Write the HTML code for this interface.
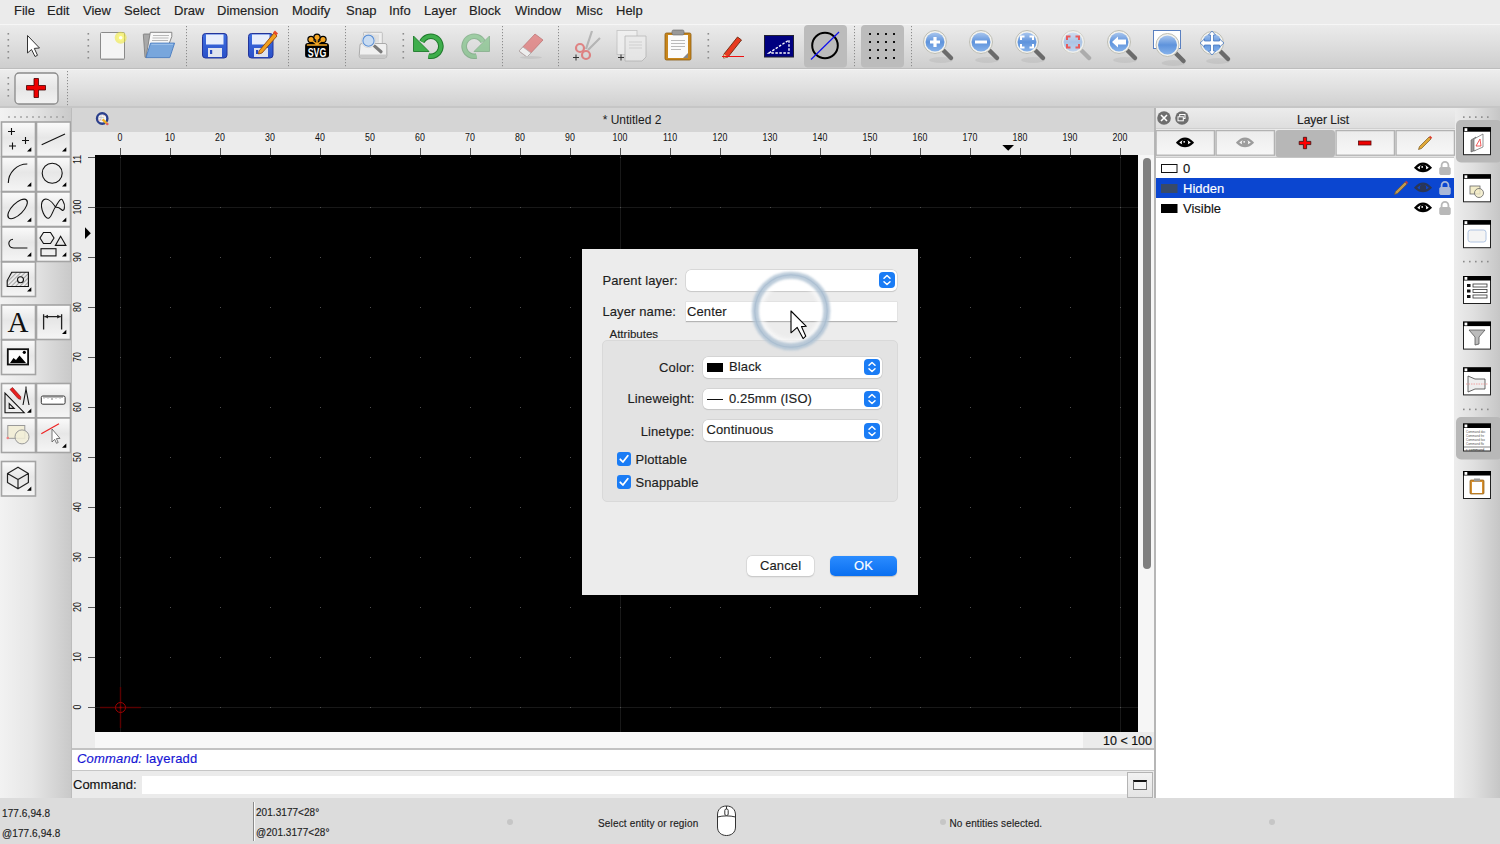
<!DOCTYPE html>
<html><head><meta charset="utf-8">
<style>
*{margin:0;padding:0;box-sizing:border-box}
html,body{-webkit-font-smoothing:antialiased;width:1500px;height:844px;overflow:hidden;background:#ececec;font-family:"Liberation Sans",sans-serif;color:#1a1a1a}
.a{position:absolute}
.t{position:absolute;white-space:nowrap;line-height:1;-webkit-text-stroke:0.15px currentColor}
#menubar{left:0;top:0;width:1500px;height:24px;background:#ebebeb}
#menubar .t{top:4px;font-size:13px;color:#222}
#tb1{left:0;top:24px;width:1500px;height:45px;background:linear-gradient(#ebebeb,#e0e0e0 40%,#cecece);border-top:1px solid #f6f6f6;border-bottom:1px solid #bdbdbd}
#tb2{left:0;top:69px;width:1500px;height:39px;background:linear-gradient(#ededed,#dfdfdf 50%,#d0d0d0);border-top:1px solid #f4f4f4;border-bottom:1px solid #c4c4c4}
.sep{position:absolute;width:2px;background:repeating-linear-gradient(#9a9a9a 0 2px,transparent 2px 6px)}
#pal{left:0;top:108px;width:71px;height:691px;background:linear-gradient(90deg,#f2f2f2,#e6e6e6 45%,#c9c9c9)}
.pb{position:absolute;width:35px;height:35px;border:2px solid #a9a9a9;background:linear-gradient(#f9f9f9,#e9e9e9 45%,#f4f4f4)}
#mdi{left:71px;top:107px;width:1084px;height:692px;background:#ececec;border-left:1px solid #bcbcbc}
#mtitle{left:72px;top:108px;width:1082px;height:24px;background:#d5d5d5}
#hruler{left:72px;top:132px;width:1082px;height:23px;background:#ececec}
#vruler{left:72px;top:155px;width:23px;height:577px;background:#ececec}
#canvas{left:95px;top:155px;width:1043px;height:577px;background:#000}
#vscroll{left:1138px;top:155px;width:16px;height:577px;background:#f6f6f6}
#status{left:0;top:798px;width:1500px;height:46px;background:#dcdcdc}
#status .t{font-size:10px;color:#1e1e1e;letter-spacing:0.2px}
#layer{left:1155px;top:108px;width:300px;height:691px;background:#ececec}
#dock{left:1455px;top:108px;width:45px;height:691px;background:linear-gradient(90deg,#ececec,#e0e0e0 40%,#c6c6c6)}
#dlg{left:582px;top:249px;width:336px;height:345.5px;background:#ececec}
.combo{position:absolute;height:21px;background:#fff;border-radius:5px;box-shadow:0 0 0 0.5px #c8c8c8,0 0.5px 1px rgba(0,0,0,.15)}
.step{position:absolute;right:2px;top:2.5px;width:16px;height:16px;border-radius:4px;background:#1a7cf5}
.dl{font-size:13px;color:#1d1d1d;letter-spacing:0.12px}
.chk{position:absolute;width:14px;height:14px;border-radius:3px;background:#1a7cf5}
</style></head><body>
<div id="menubar" class="a">
<span class="t" style="left:14px">File</span>
<span class="t" style="left:47px">Edit</span>
<span class="t" style="left:83px">View</span>
<span class="t" style="left:124px">Select</span>
<span class="t" style="left:174px">Draw</span>
<span class="t" style="left:217px">Dimension</span>
<span class="t" style="left:292px">Modify</span>
<span class="t" style="left:346px">Snap</span>
<span class="t" style="left:389px">Info</span>
<span class="t" style="left:424px">Layer</span>
<span class="t" style="left:469px">Block</span>
<span class="t" style="left:515px">Window</span>
<span class="t" style="left:576px">Misc</span>
<span class="t" style="left:616px">Help</span>
</div>
<div id="tb1" class="a"></div>
<div id="tb2" class="a"></div>
<svg class="a" style="left:0;top:0" width="1500" height="110" viewBox="0 0 1500 110">
<defs>
<linearGradient id="lens" x1="0" y1="0" x2="0" y2="1"><stop offset="0" stop-color="#a9c6ee"/><stop offset="0.5" stop-color="#5e93dc"/><stop offset="1" stop-color="#86b2ea"/></linearGradient>
<linearGradient id="lensf" x1="0" y1="0" x2="0" y2="1"><stop offset="0" stop-color="#cddcf0"/><stop offset="0.5" stop-color="#a6c2e6"/><stop offset="1" stop-color="#bcd2ee"/></linearGradient>
<g id="mag"><ellipse cx="6" cy="18" rx="12" ry="3" fill="#000" opacity="0.06"/><line x1="8" y1="8" x2="16" y2="16" stroke="#6b6b6b" stroke-width="4.5" stroke-linecap="round"/><circle r="11.5" fill="#f2f2ee" stroke="#bdbdb4" stroke-width="1"/><circle r="9.5" fill="url(#lens)"/></g>
<g id="magf" opacity="0.9"><line x1="8" y1="8" x2="16" y2="16" stroke="#a8a8a8" stroke-width="4.5" stroke-linecap="round"/><circle r="11.5" fill="#f2f2ee" stroke="#cfcfc8" stroke-width="1"/><circle r="9.5" fill="url(#lensf)"/></g>
<linearGradient id="flop" x1="0" y1="0" x2="0" y2="1"><stop offset="0" stop-color="#3f6fe0"/><stop offset="1" stop-color="#2a50c8"/></linearGradient>
</defs>
<!-- separators -->
<g fill="#8c8c8c">
<rect x="7.5" y="33" width="1.6" height="1.6"/><rect x="7.5" y="39" width="1.6" height="1.6"/><rect x="7.5" y="45" width="1.6" height="1.6"/><rect x="7.5" y="51" width="1.6" height="1.6"/><rect x="7.5" y="57" width="1.6" height="1.6"/><rect x="87.5" y="33" width="1.6" height="1.6"/><rect x="87.5" y="39" width="1.6" height="1.6"/><rect x="87.5" y="45" width="1.6" height="1.6"/><rect x="87.5" y="51" width="1.6" height="1.6"/><rect x="87.5" y="57" width="1.6" height="1.6"/><rect x="186" y="26" width="1" height="1.2"/><rect x="186" y="29" width="1" height="1.2"/><rect x="186" y="32" width="1" height="1.2"/><rect x="186" y="35" width="1" height="1.2"/><rect x="186" y="38" width="1" height="1.2"/><rect x="186" y="41" width="1" height="1.2"/><rect x="186" y="44" width="1" height="1.2"/><rect x="186" y="47" width="1" height="1.2"/><rect x="186" y="50" width="1" height="1.2"/><rect x="186" y="53" width="1" height="1.2"/><rect x="186" y="56" width="1" height="1.2"/><rect x="186" y="59" width="1" height="1.2"/><rect x="186" y="62" width="1" height="1.2"/><rect x="186" y="65" width="1" height="1.2"/><rect x="288" y="26" width="1" height="1.2"/><rect x="288" y="29" width="1" height="1.2"/><rect x="288" y="32" width="1" height="1.2"/><rect x="288" y="35" width="1" height="1.2"/><rect x="288" y="38" width="1" height="1.2"/><rect x="288" y="41" width="1" height="1.2"/><rect x="288" y="44" width="1" height="1.2"/><rect x="288" y="47" width="1" height="1.2"/><rect x="288" y="50" width="1" height="1.2"/><rect x="288" y="53" width="1" height="1.2"/><rect x="288" y="56" width="1" height="1.2"/><rect x="288" y="59" width="1" height="1.2"/><rect x="288" y="62" width="1" height="1.2"/><rect x="288" y="65" width="1" height="1.2"/><rect x="345" y="26" width="1" height="1.2"/><rect x="345" y="29" width="1" height="1.2"/><rect x="345" y="32" width="1" height="1.2"/><rect x="345" y="35" width="1" height="1.2"/><rect x="345" y="38" width="1" height="1.2"/><rect x="345" y="41" width="1" height="1.2"/><rect x="345" y="44" width="1" height="1.2"/><rect x="345" y="47" width="1" height="1.2"/><rect x="345" y="50" width="1" height="1.2"/><rect x="345" y="53" width="1" height="1.2"/><rect x="345" y="56" width="1" height="1.2"/><rect x="345" y="59" width="1" height="1.2"/><rect x="345" y="62" width="1" height="1.2"/><rect x="345" y="65" width="1" height="1.2"/><rect x="402.5" y="33" width="1.6" height="1.6"/><rect x="402.5" y="39" width="1.6" height="1.6"/><rect x="402.5" y="45" width="1.6" height="1.6"/><rect x="402.5" y="51" width="1.6" height="1.6"/><rect x="402.5" y="57" width="1.6" height="1.6"/><rect x="502" y="26" width="1" height="1.2"/><rect x="502" y="29" width="1" height="1.2"/><rect x="502" y="32" width="1" height="1.2"/><rect x="502" y="35" width="1" height="1.2"/><rect x="502" y="38" width="1" height="1.2"/><rect x="502" y="41" width="1" height="1.2"/><rect x="502" y="44" width="1" height="1.2"/><rect x="502" y="47" width="1" height="1.2"/><rect x="502" y="50" width="1" height="1.2"/><rect x="502" y="53" width="1" height="1.2"/><rect x="502" y="56" width="1" height="1.2"/><rect x="502" y="59" width="1" height="1.2"/><rect x="502" y="62" width="1" height="1.2"/><rect x="502" y="65" width="1" height="1.2"/><rect x="558" y="26" width="1" height="1.2"/><rect x="558" y="29" width="1" height="1.2"/><rect x="558" y="32" width="1" height="1.2"/><rect x="558" y="35" width="1" height="1.2"/><rect x="558" y="38" width="1" height="1.2"/><rect x="558" y="41" width="1" height="1.2"/><rect x="558" y="44" width="1" height="1.2"/><rect x="558" y="47" width="1" height="1.2"/><rect x="558" y="50" width="1" height="1.2"/><rect x="558" y="53" width="1" height="1.2"/><rect x="558" y="56" width="1" height="1.2"/><rect x="558" y="59" width="1" height="1.2"/><rect x="558" y="62" width="1" height="1.2"/><rect x="558" y="65" width="1" height="1.2"/><rect x="707.5" y="33" width="1.6" height="1.6"/><rect x="707.5" y="39" width="1.6" height="1.6"/><rect x="707.5" y="45" width="1.6" height="1.6"/><rect x="707.5" y="51" width="1.6" height="1.6"/><rect x="707.5" y="57" width="1.6" height="1.6"/><rect x="854" y="26" width="1" height="1.2"/><rect x="854" y="29" width="1" height="1.2"/><rect x="854" y="32" width="1" height="1.2"/><rect x="854" y="35" width="1" height="1.2"/><rect x="854" y="38" width="1" height="1.2"/><rect x="854" y="41" width="1" height="1.2"/><rect x="854" y="44" width="1" height="1.2"/><rect x="854" y="47" width="1" height="1.2"/><rect x="854" y="50" width="1" height="1.2"/><rect x="854" y="53" width="1" height="1.2"/><rect x="854" y="56" width="1" height="1.2"/><rect x="854" y="59" width="1" height="1.2"/><rect x="854" y="62" width="1" height="1.2"/><rect x="854" y="65" width="1" height="1.2"/><rect x="911" y="26" width="1" height="1.2"/><rect x="911" y="29" width="1" height="1.2"/><rect x="911" y="32" width="1" height="1.2"/><rect x="911" y="35" width="1" height="1.2"/><rect x="911" y="38" width="1" height="1.2"/><rect x="911" y="41" width="1" height="1.2"/><rect x="911" y="44" width="1" height="1.2"/><rect x="911" y="47" width="1" height="1.2"/><rect x="911" y="50" width="1" height="1.2"/><rect x="911" y="53" width="1" height="1.2"/><rect x="911" y="56" width="1" height="1.2"/><rect x="911" y="59" width="1" height="1.2"/><rect x="911" y="62" width="1" height="1.2"/><rect x="911" y="65" width="1" height="1.2"/></g>
<g fill="#8c8c8c"><rect x="7.5" y="77" width="1.6" height="1.6"/><rect x="7.5" y="83" width="1.6" height="1.6"/><rect x="7.5" y="89" width="1.6" height="1.6"/><rect x="7.5" y="95" width="1.6" height="1.6"/><rect x="67" y="71" width="1" height="1.2"/><rect x="67" y="74" width="1" height="1.2"/><rect x="67" y="77" width="1" height="1.2"/><rect x="67" y="80" width="1" height="1.2"/><rect x="67" y="83" width="1" height="1.2"/><rect x="67" y="86" width="1" height="1.2"/><rect x="67" y="89" width="1" height="1.2"/><rect x="67" y="92" width="1" height="1.2"/><rect x="67" y="95" width="1" height="1.2"/><rect x="67" y="98" width="1" height="1.2"/><rect x="67" y="101" width="1" height="1.2"/><rect x="67" y="104" width="1" height="1.2"/></g>

<!-- select arrow -->
<path d="M27.5 35.5 L27.5 53 L31.5 49.5 L35 56.5 L37.5 55.3 L34.3 48.4 L39.5 48 Z" fill="#fff" stroke="#333" stroke-width="1"/>
<!-- new doc -->
<rect x="100.5" y="32.5" width="24" height="27" rx="1" fill="#f4f4f4" stroke="#8a8a8a"/>
<rect x="101" y="58.5" width="23" height="1.5" fill="#9a9a9a"/>
<circle cx="120.7" cy="37.7" r="6" fill="#eee840" opacity="0.6"/><circle cx="120.7" cy="37.7" r="3.6" fill="#f8f480"/><circle cx="120.7" cy="37.7" r="1.8" fill="#fffff0"/>
<!-- open folder -->
<path d="M143.3 34.5 Q143.3 34 144 34 L150.5 34 L150.5 55 L146 57.3 L145 57.3Z" fill="#a8a8a8" stroke="#7a7a7a" stroke-width="0.8"/>
<path d="M150.3 32.3 L171.8 32.3 L171.8 36.5 L169.4 43 L146.2 56.3Z" fill="#f8f8f8" stroke="#7c7c7c" stroke-width="0.9"/>
<path d="M153 35.5 H169 M152.5 38 H168.5 M152 40.5 H168" stroke="#b8b8b8" stroke-width="1.1"/>
<path d="M150.5 43.1 L174.6 43.1 L169.8 57.6 L146 57.6Z" fill="#78a6dc" stroke="#4a7cc0" stroke-width="0.9" stroke-linejoin="round"/>
<path d="M151.3 44.3 L173 44.3" stroke="#a8c8ee" stroke-width="0.9"/>
<!-- save -->
<rect x="202.5" y="33.5" width="24.5" height="24.5" rx="3" fill="url(#flop)" stroke="#23349a" stroke-width="1"/>
<rect x="206" y="34.5" width="17.5" height="10" fill="#e8eefc"/>
<rect x="208" y="48" width="14" height="9" fill="#dfe3ee"/><rect x="210" y="50" width="2.2" height="4" fill="#2a4ac0"/>
<!-- save as -->
<rect x="248.5" y="33.5" width="24.5" height="24.5" rx="3" fill="url(#flop)" stroke="#23349a" stroke-width="1"/>
<rect x="252" y="34.5" width="17.5" height="10" fill="#e8eefc"/>
<rect x="254" y="48" width="14" height="9" fill="#dfe3ee"/><rect x="256" y="50" width="2.2" height="4" fill="#2a4ac0"/>
<path d="M259 51 L274 33 L277 36 L262 53 L258.5 54 Z" fill="#f0a020" stroke="#8a3a00" stroke-width="0.8"/>
<path d="M273 32.5 L275 30.5 L278 33.5 L276 35.5Z" fill="#e84a2a"/>
<!-- SVG logo -->
<g stroke="#000" stroke-width="2.6" stroke-linecap="round" fill="none">
<path d="M317 44 V37.2 M317 44 L311 39.5 M317 44 L323 39.5"/>
</g>
<g fill="#000"><circle cx="317" cy="37.2" r="3.7"/><circle cx="311" cy="39.5" r="3.7"/><circle cx="323" cy="39.5" r="3.7"/></g>
<path d="M305.1 46 Q305.1 42.9 308 42.9 L326 42.9 Q329 42.9 329 46 L329 55 Q329 57.8 326 57.8 L308 57.8 Q305.1 57.8 305.1 55Z" fill="#000"/>
<g stroke="#f5a623" stroke-width="1.5" stroke-linecap="round" fill="none"><path d="M317 44.5 V37.2 M317 44.5 L311 39.5 M317 44.5 L323 39.5 M307.5 45 H326.5"/></g>
<g fill="#f5a623"><circle cx="317" cy="37.2" r="2.5"/><circle cx="311" cy="39.5" r="2.5"/><circle cx="323" cy="39.5" r="2.5"/></g>
<text transform="translate(317 56.9) scale(0.66 1)" font-family="Liberation Sans" font-weight="bold" font-size="13.4" fill="#fff" text-anchor="middle">SVG</text>
<!-- print preview -->
<rect x="363.5" y="32.3" width="18.8" height="14" rx="1" fill="#efefef" stroke="#b4b4b4" stroke-width="0.8"/>
<rect x="366" y="34.5" width="13" height="8" fill="#e0e0e0"/>
<path d="M360 45 Q360 43.5 362 43.5 L385 43.5 Q386.8 43.5 386.8 45.5 L386.8 56 Q386.8 58 384.5 58 L361.5 58 Q359.2 58 359.2 56Z" fill="#f0f0f0" stroke="#9a9a9a" stroke-width="0.8"/>
<rect x="359.6" y="54.5" width="26.8" height="3.3" rx="1" fill="#c8c8c8"/>
<line x1="374.6" y1="46.1" x2="381" y2="51.8" stroke="#7a7a7a" stroke-width="3.2" stroke-linecap="round"/>
<circle cx="368.5" cy="40.7" r="7" fill="#f4f4f4" stroke="#c8c8c8" stroke-width="0.6"/>
<circle cx="368.5" cy="40.7" r="5.6" fill="#c9dcf2" stroke="#5b8fd4" stroke-width="1.1"/>
<!-- undo -->
<path d="M421.9 41.8 A10 10 0 1 1 428.5 56" fill="none" stroke="#1f7a2c" stroke-width="5.6"/>
<path d="M421.9 41.8 A10 10 0 1 1 428.5 56" fill="none" stroke="#3fae4c" stroke-width="3.6"/>
<path d="M413.5 36 L413.5 51.5 L429 51.5Z" fill="#3fae4c" stroke="#1f7a2c" stroke-width="0.9" stroke-linejoin="round"/>
<!-- redo faded -->
<g opacity="0.42">
<path d="M483.1 41.8 A10 10 0 1 0 476.5 56" fill="none" stroke="#1f7a2c" stroke-width="5.6"/>
<path d="M483.1 41.8 A10 10 0 1 0 476.5 56" fill="none" stroke="#3fae4c" stroke-width="3.6"/>
<path d="M489.5 36 L489.5 51.5 L474 51.5Z" fill="#3fae4c" stroke="#1f7a2c" stroke-width="0.9" stroke-linejoin="round"/>
</g>
<!-- eraser faded -->
<g opacity="0.55"><path d="M519 51 L535 34 L543 40 L527 57 Z" fill="#e05050" stroke="#a02020" stroke-width="0.8"/><path d="M519 51 L523 47 L531 53 L527 57Z" fill="#fff" stroke="#888" stroke-width="0.8"/><ellipse cx="531" cy="57.5" rx="11" ry="1.5" fill="#bbb"/></g>
<!-- scissors faded -->
<g opacity="0.6"><path d="M586 49 L592 31 M588 50 L600 38" stroke="#999" stroke-width="2.2" fill="none"/><circle cx="580" cy="48" r="4" fill="none" stroke="#e04848" stroke-width="2.2"/><circle cx="586" cy="55" r="4" fill="none" stroke="#e04848" stroke-width="2.2"/></g>
<path d="M573 57.5 H579 M576 54.5 V60.5" stroke="#333" stroke-width="1"/>
<!-- copy faded -->
<g opacity="0.6"><rect x="617" y="30.5" width="20" height="24" fill="#f6f6f6" stroke="#aaa" stroke-width="0.8"/><path d="M625 36 H646 V57 L642 61 H625Z" fill="#f0f0f0" stroke="#999" stroke-width="0.8"/><g stroke="#bbb" stroke-width="0.8"><line x1="629" y1="42" x2="642" y2="42"/><line x1="629" y1="45" x2="642" y2="45"/><line x1="629" y1="48" x2="642" y2="48"/></g></g>
<path d="M618 57.5 H624 M621 54.5 V60.5" stroke="#333" stroke-width="1"/>
<!-- paste -->
<rect x="665" y="33" width="26" height="27" rx="1.5" fill="#c8861c" stroke="#8a5a10" stroke-width="0.8"/>
<rect x="668" y="35" width="20" height="23" fill="#fbfbfb"/>
<g stroke="#aaa" stroke-width="0.8"><line x1="671" y1="40.5" x2="685" y2="40.5"/><line x1="671" y1="43.5" x2="685" y2="43.5"/><line x1="671" y1="46.5" x2="685" y2="46.5"/><line x1="671" y1="49.5" x2="681" y2="49.5"/></g>
<path d="M683 58 L688 53 L688 58Z" fill="#888"/>
<rect x="672" y="30" width="12" height="5" rx="1.5" fill="#999" stroke="#666" stroke-width="0.6"/>
<!-- pencil -->
<path d="M724 54 L737.5 37 L741.5 40 L728 57 L723.5 58 Z" fill="#e83a20" stroke="#6a2a10" stroke-width="0.9"/>
<path d="M723.5 58 L724 54 L728 57Z" fill="#f0c890"/>
<line x1="722" y1="56.5" x2="744" y2="56.5" stroke="#ee1111" stroke-width="1"/>
<!-- dim rect -->
<rect x="764.5" y="35.5" width="29" height="21.5" fill="#000080" stroke="#223" stroke-width="1"/>
<path d="M769 53 L789 40 L789 53 Z" fill="none" stroke="#fff" stroke-width="1.4" stroke-dasharray="2.5 1.5"/>
<!-- pressed buttons -->
<rect x="804" y="25" width="43" height="42.5" rx="4" fill="#bcbcbc"/>
<circle cx="825" cy="45.5" r="12.8" fill="none" stroke="#000" stroke-width="2"/>
<line x1="811" y1="59.5" x2="839" y2="32" stroke="#1010ee" stroke-width="1.2"/>
<rect x="861" y="25" width="43" height="42.5" rx="4" fill="#bcbcbc"/>
<g fill="#111">
<rect x="869" y="33" width="2" height="2"/><rect x="869" y="41" width="2" height="2"/><rect x="869" y="49" width="2" height="2"/><rect x="869" y="57" width="2" height="2"/><rect x="877" y="33" width="2" height="2"/><rect x="877" y="41" width="2" height="2"/><rect x="877" y="49" width="2" height="2"/><rect x="877" y="57" width="2" height="2"/><rect x="885" y="33" width="2" height="2"/><rect x="885" y="41" width="2" height="2"/><rect x="885" y="49" width="2" height="2"/><rect x="885" y="57" width="2" height="2"/><rect x="893" y="33" width="2" height="2"/><rect x="893" y="41" width="2" height="2"/><rect x="893" y="49" width="2" height="2"/><rect x="893" y="57" width="2" height="2"/></g>
<use href="#mag" x="935" y="42"/>
<path d="M930 42 H940 M935 37 V47" stroke="#fff" stroke-width="3.2"/>
<use href="#mag" x="981" y="42"/>
<path d="M975 42 H987" stroke="#fff" stroke-width="3"/>
<use href="#mag" x="1027" y="42"/>
<path d="M1021 40 V36.5 H1024.5 M1029.5 36.5 H1033 V40 M1033 44 V47.5 H1029.5 M1024.5 47.5 H1021 V44" stroke="#fff" stroke-width="2" fill="none"/>
<use href="#magf" x="1073" y="42"/>
<path d="M1067 40 V36.5 H1070.5 M1075.5 36.5 H1079 V40 M1079 44 V47.5 H1075.5 M1070.5 47.5 H1067 V44" stroke="#e85a5a" stroke-width="2" fill="none"/>
<use href="#mag" x="1119" y="42"/>
<path d="M1112 42 L1118 36.5 V39.5 H1126 V44.5 H1118 V47.5Z" fill="#fff"/>
<rect x="1153.5" y="30.5" width="27" height="18" fill="#fff" stroke="#5a80c0" stroke-width="1"/>
<use href="#mag" x="1167.5" y="45"/>
<use href="#mag" x="1212" y="43"/>
<path d="M1212 31 L1215.5 35 H1213.5 V41 H1219.5 V39 L1224 43 L1219.5 47 V45 H1213.5 V51 H1215.5 L1212 55 L1208.5 51 H1210.5 V45 H1204.5 V47 L1200 43 L1204.5 39 V41 H1210.5 V35 H1208.5Z" fill="#fff" stroke="#4a7ac0" stroke-width="0.8"/>
<!-- red plus button tb2 -->
<rect x="15" y="73" width="43" height="31" rx="4" fill="url(#btng)" stroke="#8a8a8a" stroke-width="1.3"/>
<linearGradient id="btng" x1="0" y1="0" x2="0" y2="1"><stop offset="0" stop-color="#f4f4f4"/><stop offset="0.5" stop-color="#e6e6e6"/><stop offset="1" stop-color="#f2f2f2"/></linearGradient>
<path d="M34 78.5 H38.5 V85.5 H45.5 V90 H38.5 V97.5 H34 V90 H26.5 V85.5 H34Z" fill="#ee0000" stroke="#400" stroke-width="0.8"/>
</svg>
<div id="pal" class="a"></div>
<svg class="a" style="left:0;top:100px" width="72" height="410" viewBox="0 100 72 410">
<defs><linearGradient id="pbg" x1="0" y1="0" x2="0" y2="1"><stop offset="0" stop-color="#fbfbfb"/><stop offset="0.45" stop-color="#e7e7e7"/><stop offset="1" stop-color="#f5f5f5"/></linearGradient><g id="tri"><path d="M0 4.3 L4.3 4.3 L4.3 0Z" fill="#000"/></g></defs>
<g fill="#a0a0a0"><rect x="8" y="116" width="2" height="2" opacity="0.7"/><rect x="14" y="116" width="2" height="2" opacity="0.7"/><rect x="20" y="116" width="2" height="2" opacity="0.7"/><rect x="26" y="116" width="2" height="2" opacity="0.7"/><rect x="32" y="116" width="2" height="2" opacity="0.7"/><rect x="38" y="116" width="2" height="2" opacity="0.7"/><rect x="44" y="116" width="2" height="2" opacity="0.7"/><rect x="50" y="116" width="2" height="2" opacity="0.7"/><rect x="56" y="116" width="2" height="2" opacity="0.7"/><rect x="62" y="116" width="2" height="2" opacity="0.7"/></g>
<rect x="1.5" y="122" width="34" height="34.5" fill="url(#pbg)" stroke="#a4a4a4" stroke-width="1.6"/>
<rect x="36.5" y="122" width="34" height="34.5" fill="url(#pbg)" stroke="#a4a4a4" stroke-width="1.6"/>
<rect x="1.5" y="157" width="34" height="34.5" fill="url(#pbg)" stroke="#a4a4a4" stroke-width="1.6"/>
<rect x="36.5" y="157" width="34" height="34.5" fill="url(#pbg)" stroke="#a4a4a4" stroke-width="1.6"/>
<rect x="1.5" y="192" width="34" height="34.5" fill="url(#pbg)" stroke="#a4a4a4" stroke-width="1.6"/>
<rect x="36.5" y="192" width="34" height="34.5" fill="url(#pbg)" stroke="#a4a4a4" stroke-width="1.6"/>
<rect x="1.5" y="227" width="34" height="34.5" fill="url(#pbg)" stroke="#a4a4a4" stroke-width="1.6"/>
<rect x="36.5" y="227" width="34" height="34.5" fill="url(#pbg)" stroke="#a4a4a4" stroke-width="1.6"/>
<rect x="1.5" y="262" width="34" height="34.5" fill="url(#pbg)" stroke="#a4a4a4" stroke-width="1.6"/>
<rect x="1.5" y="305" width="34" height="34.5" fill="url(#pbg)" stroke="#a4a4a4" stroke-width="1.6"/>
<rect x="36.5" y="305" width="34" height="34.5" fill="url(#pbg)" stroke="#a4a4a4" stroke-width="1.6"/>
<rect x="1.5" y="340" width="34" height="34.5" fill="url(#pbg)" stroke="#a4a4a4" stroke-width="1.6"/>
<rect x="1.5" y="383.5" width="34" height="34.5" fill="url(#pbg)" stroke="#a4a4a4" stroke-width="1.6"/>
<rect x="36.5" y="383.5" width="34" height="34.5" fill="url(#pbg)" stroke="#a4a4a4" stroke-width="1.6"/>
<rect x="1.5" y="418" width="34" height="34.5" fill="url(#pbg)" stroke="#a4a4a4" stroke-width="1.6"/>
<rect x="36.5" y="418" width="34" height="34.5" fill="url(#pbg)" stroke="#a4a4a4" stroke-width="1.6"/>
<rect x="1.5" y="461.5" width="34" height="34.5" fill="url(#pbg)" stroke="#a4a4a4" stroke-width="1.6"/>
<g fill="none" stroke="#111" stroke-width="1.1">
<path d="M8 131.5 H15 M11.5 128 V135 M22 140.5 H29 M25.5 137 V144 M9 146 H16 M12.5 142.5 V149.5"/>
<path d="M41.7 144.8 L65 133.9"/>
<path d="M8.3 183 A19 19 0 0 1 27.3 164"/>
<circle cx="52.2" cy="173.2" r="10"/>
<ellipse cx="17.6" cy="208.9" rx="12.6" ry="5.6" transform="rotate(-45 17.6 208.9)"/>
<path d="M55.4 207 C51 200 45 196 42 202 C40 208 45 220 49 218 C52 216 53 210 55.4 207 C58 203 61 196 63 201 C66 206 64 212 62 210 C60 208 57 207 55.4 207Z"/>
<path d="M13 239.3 C9 239.5 8.5 243 9 244.5 C9.5 247 11 248 14 248 L27.4 248"/>
<path d="M43.5 232.5 H50.5 L54 238 L50.5 243.5 H43.5 L40 238Z"/>
<path d="M60.6 236.3 L55.4 245.4 L65.9 245.4Z"/>
<rect x="41" y="248.7" width="15" height="7.2"/>
</g>
<defs><pattern id="hatch" width="3" height="3" patternUnits="userSpaceOnUse" patternTransform="rotate(45)"><line x1="0" y1="0" x2="0" y2="3" stroke="#555" stroke-width="0.9"/></pattern></defs>
<path d="M7.2 286.5 V280.6 L11.7 272.2 H28.4 V286.5Z" fill="url(#hatch)" stroke="#111" stroke-width="1.1"/>
<circle cx="20.5" cy="279.7" r="3" fill="#eee" stroke="#111" stroke-width="1.1"/>
<use href="#tri" x="27" y="147.3"/><use href="#tri" x="62" y="147.3"/><use href="#tri" x="27" y="182.3"/><use href="#tri" x="62" y="182.3"/><use href="#tri" x="27" y="217.4"/><use href="#tri" x="62" y="217.4"/><use href="#tri" x="27" y="252.3"/><use href="#tri" x="62" y="252.3"/><use href="#tri" x="27" y="287.3"/><use href="#tri" x="62" y="329.8"/><use href="#tri" x="27" y="408.5"/><use href="#tri" x="62" y="443.5"/><use href="#tri" x="27" y="486.5"/>
<text x="18" y="332" font-family="Liberation Serif" font-size="29" text-anchor="middle" fill="#111">A</text>
<g stroke="#222" stroke-width="1.3" fill="none"><path d="M43.6 314.2 V329.6 M61.6 314.2 V329.6 M44.5 316.6 H60.7"/></g>
<path d="M44.3 316.6 L48 314.8 V318.4Z M60.9 316.6 L57.2 314.8 V318.4Z" fill="#222"/>
<rect x="7.8" y="349.2" width="20.3" height="15.3" fill="#fff" stroke="#111" stroke-width="1.8"/>
<path d="M10 363 L13.5 358 L16 360 L19.5 355.5 L26 363Z" fill="#000"/>
<circle cx="24.3" cy="352.3" r="1.6" fill="#000"/>
<g fill="none" stroke="#111" stroke-width="1.1"><path d="M5 393 V412.7 H24.2Z"/><path d="M9.2 403.5 V408.4 H14.2Z"/>
<path d="M26 389 L23 405 M26 389 L29 405 M26 386.5 V389"/></g>
<path d="M10 389.5 L12.5 387.5 L20.8 396.8 L20.5 399.5 L18 398.5Z" fill="#e82020" stroke="#7a1010" stroke-width="0.6"/>
<rect x="41.3" y="396" width="23.8" height="8.2" rx="1.5" fill="#fff" stroke="#333" stroke-width="1"/>
<path d="M44 396.5 V398.5 M46 396.5 V398 M48 396.5 V398.5 M50 396.5 V398 M52 396.5 V400 M54 396.5 V398 M56 396.5 V398.5 M58 396.5 V398 M60 396.5 V398.5 M62 396.5 V398" stroke="#444" stroke-width="0.7"/>
<rect x="7.8" y="425.5" width="17" height="12.8" fill="#f2eed8" stroke="#999" stroke-width="1"/>
<circle cx="22" cy="436.9" r="7" fill="#f2eed8" fill-opacity="0.85" stroke="#999" stroke-width="1"/>
<circle cx="7.8" cy="438" r="1.3" fill="#f08080"/>
<line x1="41.3" y1="433.8" x2="59" y2="423.8" stroke="#ee2222" stroke-width="1.2"/>
<path d="M52 429 V442 L54.7 439.3 L56.5 443.3 L58.2 442.5 L56.4 438.6 L60 438.4Z" fill="#fff" stroke="#555" stroke-width="0.8"/>
<g fill="none" stroke="#222" stroke-width="1.2" stroke-linejoin="round"><path d="M7.5 473.5 L18 467.2 L28.4 473.5 V482.5 L18 488.8 L7.5 482.5Z M7.5 473.5 L18 479.5 L28.4 473.5 M18 479.5 V488.8"/></g>
</svg>
<div id="mdi" class="a"></div>
<div id="mtitle" class="a"></div>
<div id="hruler" class="a"></div>
<div id="vruler" class="a"></div>
<div id="canvas" class="a"></div>
<div id="vscroll" class="a"></div>
<svg class="a" style="left:0;top:0" width="1160" height="800" viewBox="0 0 1160 800">
<defs><radialGradient id="ticon" cx="0.45" cy="0.45" r="0.6"><stop offset="0" stop-color="#ffffff"/><stop offset="0.6" stop-color="#dfe4ee"/><stop offset="1" stop-color="#b8c2d8"/></radialGradient></defs>
<circle cx="102.2" cy="118.5" r="5.2" fill="#f4f4f4" stroke="#2c408c" stroke-width="2.4"/>
<path d="M99 117.5 H104 M101 115 V121" stroke="#bbb" stroke-width="0.6"/><path d="M98.5 120.5 L101 119.5 M103.5 116 L104.5 115" stroke="#e08a8a" stroke-width="0.7"/>
<line x1="102.6" y1="119.4" x2="106.8" y2="123.5" stroke="#f0b020" stroke-width="2.4"/><circle cx="107.3" cy="124" r="1.3" fill="#e06060"/>
<text x="632" y="124" font-family="Liberation Sans" font-size="12" text-anchor="middle" fill="#1a1a1a">* Untitled 2</text>
<g font-family="Liberation Sans" font-size="10.3" fill="#111" text-anchor="middle"><text transform="translate(120 140.9) scale(0.86 1)">0</text><text transform="translate(170 140.9) scale(0.86 1)">10</text><text transform="translate(220 140.9) scale(0.86 1)">20</text><text transform="translate(270 140.9) scale(0.86 1)">30</text><text transform="translate(320 140.9) scale(0.86 1)">40</text><text transform="translate(370 140.9) scale(0.86 1)">50</text><text transform="translate(420 140.9) scale(0.86 1)">60</text><text transform="translate(470 140.9) scale(0.86 1)">70</text><text transform="translate(520 140.9) scale(0.86 1)">80</text><text transform="translate(570 140.9) scale(0.86 1)">90</text><text transform="translate(620 140.9) scale(0.86 1)">100</text><text transform="translate(670 140.9) scale(0.86 1)">110</text><text transform="translate(720 140.9) scale(0.86 1)">120</text><text transform="translate(770 140.9) scale(0.86 1)">130</text><text transform="translate(820 140.9) scale(0.86 1)">140</text><text transform="translate(870 140.9) scale(0.86 1)">150</text><text transform="translate(920 140.9) scale(0.86 1)">160</text><text transform="translate(970 140.9) scale(0.86 1)">170</text><text transform="translate(1020 140.9) scale(0.86 1)">180</text><text transform="translate(1070 140.9) scale(0.86 1)">190</text><text transform="translate(1120 140.9) scale(0.86 1)">200</text></g>
<g fill="#555"><rect x="120" y="148" width="1" height="7"/><rect x="170" y="148" width="1" height="7"/><rect x="220" y="148" width="1" height="7"/><rect x="270" y="148" width="1" height="7"/><rect x="320" y="148" width="1" height="7"/><rect x="370" y="148" width="1" height="7"/><rect x="420" y="148" width="1" height="7"/><rect x="470" y="148" width="1" height="7"/><rect x="520" y="148" width="1" height="7"/><rect x="570" y="148" width="1" height="7"/><rect x="620" y="148" width="1" height="7"/><rect x="670" y="148" width="1" height="7"/><rect x="720" y="148" width="1" height="7"/><rect x="770" y="148" width="1" height="7"/><rect x="820" y="148" width="1" height="7"/><rect x="870" y="148" width="1" height="7"/><rect x="920" y="148" width="1" height="7"/><rect x="970" y="148" width="1" height="7"/><rect x="1020" y="148" width="1" height="7"/><rect x="1070" y="148" width="1" height="7"/><rect x="1120" y="148" width="1" height="7"/><rect x="88" y="707" width="7" height="1"/><rect x="88" y="657" width="7" height="1"/><rect x="88" y="607" width="7" height="1"/><rect x="88" y="557" width="7" height="1"/><rect x="88" y="507" width="7" height="1"/><rect x="88" y="457" width="7" height="1"/><rect x="88" y="407" width="7" height="1"/><rect x="88" y="357" width="7" height="1"/><rect x="88" y="307" width="7" height="1"/><rect x="88" y="257" width="7" height="1"/><rect x="88" y="207" width="7" height="1"/><rect x="88" y="157" width="7" height="1"/></g>
<path d="M1002.3 145 L1014 145 L1008.2 150.8Z" fill="#000"/>
<path d="M85 227.3 L85 239 L90.8 233.2Z" fill="#000"/>
<defs><clipPath id="vrc"><rect x="72" y="155" width="23" height="577"/></clipPath></defs><g clip-path="url(#vrc)" font-family="Liberation Sans" font-size="10.3" fill="#111" text-anchor="middle"><text transform="translate(81.2 707) rotate(-90) scale(0.86 1)" x="0" y="0">0</text><text transform="translate(81.2 657) rotate(-90) scale(0.86 1)" x="0" y="0">10</text><text transform="translate(81.2 607) rotate(-90) scale(0.86 1)" x="0" y="0">20</text><text transform="translate(81.2 557) rotate(-90) scale(0.86 1)" x="0" y="0">30</text><text transform="translate(81.2 507) rotate(-90) scale(0.86 1)" x="0" y="0">40</text><text transform="translate(81.2 457) rotate(-90) scale(0.86 1)" x="0" y="0">50</text><text transform="translate(81.2 407) rotate(-90) scale(0.86 1)" x="0" y="0">60</text><text transform="translate(81.2 357) rotate(-90) scale(0.86 1)" x="0" y="0">70</text><text transform="translate(81.2 307) rotate(-90) scale(0.86 1)" x="0" y="0">80</text><text transform="translate(81.2 257) rotate(-90) scale(0.86 1)" x="0" y="0">90</text><text transform="translate(81.2 207) rotate(-90) scale(0.86 1)" x="0" y="0">100</text><text transform="translate(81.2 157) rotate(-90) scale(0.86 1)" x="0" y="0">110</text></g>
<g fill="#181818"><rect x="120" y="155" width="1" height="577"/><rect x="620" y="155" width="1" height="577"/><rect x="1120" y="155" width="1" height="577"/><rect x="95" y="207" width="1043" height="1"/><rect x="95" y="707" width="1043" height="1"/></g>
<g fill="#4e4e4e"><rect x="120" y="707" width="1" height="1"/><rect x="120" y="657" width="1" height="1"/><rect x="120" y="607" width="1" height="1"/><rect x="120" y="557" width="1" height="1"/><rect x="120" y="507" width="1" height="1"/><rect x="120" y="457" width="1" height="1"/><rect x="120" y="407" width="1" height="1"/><rect x="120" y="357" width="1" height="1"/><rect x="120" y="307" width="1" height="1"/><rect x="120" y="257" width="1" height="1"/><rect x="120" y="207" width="1" height="1"/><rect x="120" y="157" width="1" height="1"/><rect x="170" y="707" width="1" height="1"/><rect x="170" y="657" width="1" height="1"/><rect x="170" y="607" width="1" height="1"/><rect x="170" y="557" width="1" height="1"/><rect x="170" y="507" width="1" height="1"/><rect x="170" y="457" width="1" height="1"/><rect x="170" y="407" width="1" height="1"/><rect x="170" y="357" width="1" height="1"/><rect x="170" y="307" width="1" height="1"/><rect x="170" y="257" width="1" height="1"/><rect x="170" y="207" width="1" height="1"/><rect x="170" y="157" width="1" height="1"/><rect x="220" y="707" width="1" height="1"/><rect x="220" y="657" width="1" height="1"/><rect x="220" y="607" width="1" height="1"/><rect x="220" y="557" width="1" height="1"/><rect x="220" y="507" width="1" height="1"/><rect x="220" y="457" width="1" height="1"/><rect x="220" y="407" width="1" height="1"/><rect x="220" y="357" width="1" height="1"/><rect x="220" y="307" width="1" height="1"/><rect x="220" y="257" width="1" height="1"/><rect x="220" y="207" width="1" height="1"/><rect x="220" y="157" width="1" height="1"/><rect x="270" y="707" width="1" height="1"/><rect x="270" y="657" width="1" height="1"/><rect x="270" y="607" width="1" height="1"/><rect x="270" y="557" width="1" height="1"/><rect x="270" y="507" width="1" height="1"/><rect x="270" y="457" width="1" height="1"/><rect x="270" y="407" width="1" height="1"/><rect x="270" y="357" width="1" height="1"/><rect x="270" y="307" width="1" height="1"/><rect x="270" y="257" width="1" height="1"/><rect x="270" y="207" width="1" height="1"/><rect x="270" y="157" width="1" height="1"/><rect x="320" y="707" width="1" height="1"/><rect x="320" y="657" width="1" height="1"/><rect x="320" y="607" width="1" height="1"/><rect x="320" y="557" width="1" height="1"/><rect x="320" y="507" width="1" height="1"/><rect x="320" y="457" width="1" height="1"/><rect x="320" y="407" width="1" height="1"/><rect x="320" y="357" width="1" height="1"/><rect x="320" y="307" width="1" height="1"/><rect x="320" y="257" width="1" height="1"/><rect x="320" y="207" width="1" height="1"/><rect x="320" y="157" width="1" height="1"/><rect x="370" y="707" width="1" height="1"/><rect x="370" y="657" width="1" height="1"/><rect x="370" y="607" width="1" height="1"/><rect x="370" y="557" width="1" height="1"/><rect x="370" y="507" width="1" height="1"/><rect x="370" y="457" width="1" height="1"/><rect x="370" y="407" width="1" height="1"/><rect x="370" y="357" width="1" height="1"/><rect x="370" y="307" width="1" height="1"/><rect x="370" y="257" width="1" height="1"/><rect x="370" y="207" width="1" height="1"/><rect x="370" y="157" width="1" height="1"/><rect x="420" y="707" width="1" height="1"/><rect x="420" y="657" width="1" height="1"/><rect x="420" y="607" width="1" height="1"/><rect x="420" y="557" width="1" height="1"/><rect x="420" y="507" width="1" height="1"/><rect x="420" y="457" width="1" height="1"/><rect x="420" y="407" width="1" height="1"/><rect x="420" y="357" width="1" height="1"/><rect x="420" y="307" width="1" height="1"/><rect x="420" y="257" width="1" height="1"/><rect x="420" y="207" width="1" height="1"/><rect x="420" y="157" width="1" height="1"/><rect x="470" y="707" width="1" height="1"/><rect x="470" y="657" width="1" height="1"/><rect x="470" y="607" width="1" height="1"/><rect x="470" y="557" width="1" height="1"/><rect x="470" y="507" width="1" height="1"/><rect x="470" y="457" width="1" height="1"/><rect x="470" y="407" width="1" height="1"/><rect x="470" y="357" width="1" height="1"/><rect x="470" y="307" width="1" height="1"/><rect x="470" y="257" width="1" height="1"/><rect x="470" y="207" width="1" height="1"/><rect x="470" y="157" width="1" height="1"/><rect x="520" y="707" width="1" height="1"/><rect x="520" y="657" width="1" height="1"/><rect x="520" y="607" width="1" height="1"/><rect x="520" y="557" width="1" height="1"/><rect x="520" y="507" width="1" height="1"/><rect x="520" y="457" width="1" height="1"/><rect x="520" y="407" width="1" height="1"/><rect x="520" y="357" width="1" height="1"/><rect x="520" y="307" width="1" height="1"/><rect x="520" y="257" width="1" height="1"/><rect x="520" y="207" width="1" height="1"/><rect x="520" y="157" width="1" height="1"/><rect x="570" y="707" width="1" height="1"/><rect x="570" y="657" width="1" height="1"/><rect x="570" y="607" width="1" height="1"/><rect x="570" y="557" width="1" height="1"/><rect x="570" y="507" width="1" height="1"/><rect x="570" y="457" width="1" height="1"/><rect x="570" y="407" width="1" height="1"/><rect x="570" y="357" width="1" height="1"/><rect x="570" y="307" width="1" height="1"/><rect x="570" y="257" width="1" height="1"/><rect x="570" y="207" width="1" height="1"/><rect x="570" y="157" width="1" height="1"/><rect x="620" y="707" width="1" height="1"/><rect x="620" y="657" width="1" height="1"/><rect x="620" y="607" width="1" height="1"/><rect x="620" y="557" width="1" height="1"/><rect x="620" y="507" width="1" height="1"/><rect x="620" y="457" width="1" height="1"/><rect x="620" y="407" width="1" height="1"/><rect x="620" y="357" width="1" height="1"/><rect x="620" y="307" width="1" height="1"/><rect x="620" y="257" width="1" height="1"/><rect x="620" y="207" width="1" height="1"/><rect x="620" y="157" width="1" height="1"/><rect x="670" y="707" width="1" height="1"/><rect x="670" y="657" width="1" height="1"/><rect x="670" y="607" width="1" height="1"/><rect x="670" y="557" width="1" height="1"/><rect x="670" y="507" width="1" height="1"/><rect x="670" y="457" width="1" height="1"/><rect x="670" y="407" width="1" height="1"/><rect x="670" y="357" width="1" height="1"/><rect x="670" y="307" width="1" height="1"/><rect x="670" y="257" width="1" height="1"/><rect x="670" y="207" width="1" height="1"/><rect x="670" y="157" width="1" height="1"/><rect x="720" y="707" width="1" height="1"/><rect x="720" y="657" width="1" height="1"/><rect x="720" y="607" width="1" height="1"/><rect x="720" y="557" width="1" height="1"/><rect x="720" y="507" width="1" height="1"/><rect x="720" y="457" width="1" height="1"/><rect x="720" y="407" width="1" height="1"/><rect x="720" y="357" width="1" height="1"/><rect x="720" y="307" width="1" height="1"/><rect x="720" y="257" width="1" height="1"/><rect x="720" y="207" width="1" height="1"/><rect x="720" y="157" width="1" height="1"/><rect x="770" y="707" width="1" height="1"/><rect x="770" y="657" width="1" height="1"/><rect x="770" y="607" width="1" height="1"/><rect x="770" y="557" width="1" height="1"/><rect x="770" y="507" width="1" height="1"/><rect x="770" y="457" width="1" height="1"/><rect x="770" y="407" width="1" height="1"/><rect x="770" y="357" width="1" height="1"/><rect x="770" y="307" width="1" height="1"/><rect x="770" y="257" width="1" height="1"/><rect x="770" y="207" width="1" height="1"/><rect x="770" y="157" width="1" height="1"/><rect x="820" y="707" width="1" height="1"/><rect x="820" y="657" width="1" height="1"/><rect x="820" y="607" width="1" height="1"/><rect x="820" y="557" width="1" height="1"/><rect x="820" y="507" width="1" height="1"/><rect x="820" y="457" width="1" height="1"/><rect x="820" y="407" width="1" height="1"/><rect x="820" y="357" width="1" height="1"/><rect x="820" y="307" width="1" height="1"/><rect x="820" y="257" width="1" height="1"/><rect x="820" y="207" width="1" height="1"/><rect x="820" y="157" width="1" height="1"/><rect x="870" y="707" width="1" height="1"/><rect x="870" y="657" width="1" height="1"/><rect x="870" y="607" width="1" height="1"/><rect x="870" y="557" width="1" height="1"/><rect x="870" y="507" width="1" height="1"/><rect x="870" y="457" width="1" height="1"/><rect x="870" y="407" width="1" height="1"/><rect x="870" y="357" width="1" height="1"/><rect x="870" y="307" width="1" height="1"/><rect x="870" y="257" width="1" height="1"/><rect x="870" y="207" width="1" height="1"/><rect x="870" y="157" width="1" height="1"/><rect x="920" y="707" width="1" height="1"/><rect x="920" y="657" width="1" height="1"/><rect x="920" y="607" width="1" height="1"/><rect x="920" y="557" width="1" height="1"/><rect x="920" y="507" width="1" height="1"/><rect x="920" y="457" width="1" height="1"/><rect x="920" y="407" width="1" height="1"/><rect x="920" y="357" width="1" height="1"/><rect x="920" y="307" width="1" height="1"/><rect x="920" y="257" width="1" height="1"/><rect x="920" y="207" width="1" height="1"/><rect x="920" y="157" width="1" height="1"/><rect x="970" y="707" width="1" height="1"/><rect x="970" y="657" width="1" height="1"/><rect x="970" y="607" width="1" height="1"/><rect x="970" y="557" width="1" height="1"/><rect x="970" y="507" width="1" height="1"/><rect x="970" y="457" width="1" height="1"/><rect x="970" y="407" width="1" height="1"/><rect x="970" y="357" width="1" height="1"/><rect x="970" y="307" width="1" height="1"/><rect x="970" y="257" width="1" height="1"/><rect x="970" y="207" width="1" height="1"/><rect x="970" y="157" width="1" height="1"/><rect x="1020" y="707" width="1" height="1"/><rect x="1020" y="657" width="1" height="1"/><rect x="1020" y="607" width="1" height="1"/><rect x="1020" y="557" width="1" height="1"/><rect x="1020" y="507" width="1" height="1"/><rect x="1020" y="457" width="1" height="1"/><rect x="1020" y="407" width="1" height="1"/><rect x="1020" y="357" width="1" height="1"/><rect x="1020" y="307" width="1" height="1"/><rect x="1020" y="257" width="1" height="1"/><rect x="1020" y="207" width="1" height="1"/><rect x="1020" y="157" width="1" height="1"/><rect x="1070" y="707" width="1" height="1"/><rect x="1070" y="657" width="1" height="1"/><rect x="1070" y="607" width="1" height="1"/><rect x="1070" y="557" width="1" height="1"/><rect x="1070" y="507" width="1" height="1"/><rect x="1070" y="457" width="1" height="1"/><rect x="1070" y="407" width="1" height="1"/><rect x="1070" y="357" width="1" height="1"/><rect x="1070" y="307" width="1" height="1"/><rect x="1070" y="257" width="1" height="1"/><rect x="1070" y="207" width="1" height="1"/><rect x="1070" y="157" width="1" height="1"/><rect x="1120" y="707" width="1" height="1"/><rect x="1120" y="657" width="1" height="1"/><rect x="1120" y="607" width="1" height="1"/><rect x="1120" y="557" width="1" height="1"/><rect x="1120" y="507" width="1" height="1"/><rect x="1120" y="457" width="1" height="1"/><rect x="1120" y="407" width="1" height="1"/><rect x="1120" y="357" width="1" height="1"/><rect x="1120" y="307" width="1" height="1"/><rect x="1120" y="257" width="1" height="1"/><rect x="1120" y="207" width="1" height="1"/><rect x="1120" y="157" width="1" height="1"/></g>

<g fill="#5a0000"><rect x="100" y="706.8" width="41" height="1.4"/><rect x="119.8" y="687" width="1.4" height="41"/></g><circle cx="120.5" cy="707.5" r="5" fill="none" stroke="#a00000" stroke-width="1"/><circle cx="120.5" cy="707.5" r="1" fill="#a00000"/>
</svg>

<div id="layer" class="a"></div>
<div id="dock" class="a"></div>

<!-- bottom of mdi -->
<div class="a" style="left:95px;top:732px;width:988px;height:16px;background:#f7f7f7"></div>
<div class="a" style="left:1083px;top:732px;width:71px;height:16px;background:#ebebeb"></div>
<span class="t" style="left:1103px;top:735px;font-size:12.5px;color:#111">10 &lt; 100</span>
<div class="a" style="left:1143px;top:158px;width:8px;height:411px;border-radius:4px;background:#7f7f7f"></div>
<div class="a" style="left:72px;top:748px;width:1082px;height:2px;background:#c2c2c2"></div>
<div class="a" style="left:72px;top:750px;width:1082px;height:20px;background:#fff"></div>
<div class="a" style="left:72px;top:770px;width:1082px;height:1px;background:#c6c6c6"></div>
<div class="a" style="left:72px;top:771px;width:1082px;height:27px;background:#ebebeb"></div>
<span class="t" style="left:77px;top:752px;font-size:13px;color:#1515d4;letter-spacing:0.2px"><i>Command:</i> layeradd</span>
<span class="t" style="left:73px;top:778px;font-size:13px;color:#111">Command:</span>
<div class="a" style="left:142px;top:776px;width:985px;height:18px;background:#fff"></div>
<div class="a" style="left:1127px;top:772px;width:26px;height:25.5px;background:linear-gradient(#f2f2f2,#e4e4e4);border:1px solid #b4b4b4"></div>
<div class="a" style="left:1133px;top:780px;width:14px;height:10px;background:#f2f2f2;border:1px solid #6a6a6a;border-top:2.5px solid #111"></div>
<div class="a" style="left:1154px;top:108px;width:1.5px;height:690px;background:#b6b6b6"></div>
<div class="a" style="left:1156px;top:108px;width:299px;height:21px;background:linear-gradient(#ececec,#dedede);border-bottom:1px solid #cfcfcf"></div>
<div class="a" style="left:0;top:106px;width:1500px;height:2px;background:#c6c6c6"></div>
<span class="t" style="left:1297px;top:113.5px;font-size:12px;color:#222">Layer List</span>
<div class="a" style="left:1156px;top:130px;width:298px;height:27px;background:#e2e2e2"></div>
<div class="a" style="left:1156px;top:157px;width:298px;height:642px;background:#fff;border-top:1px solid #cacaca"></div>
<div class="a" style="left:1156px;top:178px;width:298px;height:19.5px;background:#0b46d0"></div>
<span class="t" style="left:1183px;top:161.5px;font-size:13px;color:#111">0</span>
<span class="t" style="left:1183px;top:181.5px;font-size:13px;color:#fff">Hidden</span>
<span class="t" style="left:1183px;top:201.5px;font-size:13px;color:#111">Visible</span>
<svg class="a" style="left:1150px;top:100px" width="350" height="420" viewBox="1150 100 350 420">
<defs>
<linearGradient id="lbg" x1="0" y1="0" x2="0" y2="1"><stop offset="0" stop-color="#ececec"/><stop offset="1" stop-color="#f7f7f7"/></linearGradient>
<g id="eye"><path d="M-7.5 0 Q0 -8 7.5 0 Q0 7 -7.5 0Z" fill="#fff" stroke="#000" stroke-width="2.2"/><circle cx="0" cy="0.2" r="3.2" fill="#000"/><circle cx="-0.8" cy="-0.8" r="0.9" fill="#fff"/></g>
<g id="lock"><path d="M-3.4 -1 V-3.2 A3.4 3.5 0 0 1 3.4 -3.2 V-1" fill="none" stroke-width="1.8"/><rect x="-5.2" y="-1" width="10.4" height="7" rx="0.8"/></g>
<g id="pen"><path d="M-6.5 6.5 L-5.5 3.5 L4 -6 L6 -4 L-3.5 5.5Z" fill="#e0a838" stroke="#7a5a20" stroke-width="0.7"/><path d="M4 -6 L5.2 -7.2 L7.2 -5.2 L6 -4Z" fill="#e03a2a"/></g>
</defs>
<rect x="1156.1" y="130.6" width="58.3" height="24.6" fill="url(#lbg)" stroke="#b2b2b2" stroke-width="1.3"/><rect x="1216.1" y="130.6" width="58.3" height="24.6" fill="url(#lbg)" stroke="#b2b2b2" stroke-width="1.3"/><rect x="1275.5" y="130" width="59.5" height="27.3" rx="3.5" fill="#b7b7b7"/><rect x="1336.1" y="130.6" width="58.3" height="24.6" fill="url(#lbg)" stroke="#b2b2b2" stroke-width="1.3"/><rect x="1396.1" y="130.6" width="58.3" height="24.6" fill="url(#lbg)" stroke="#b2b2b2" stroke-width="1.3"/>
<use href="#eye" x="1185" y="142.6"/>
<g opacity="0.35"><use href="#eye" x="1245" y="142.6"/></g>
<path d="M1303.4 137.3 H1306.6 V141.4 H1310.8 V144.6 H1306.6 V148.7 H1303.4 V144.6 H1299.2 V141.4 H1303.4Z" fill="#ff0000" stroke="#3a1010" stroke-width="0.8"/>
<rect x="1358.5" y="141" width="12.5" height="4" fill="#ee0000" stroke="#5a0a0a" stroke-width="0.8"/>
<use href="#pen" x="1425" y="143"/>
<circle cx="1164" cy="118" r="6.8" fill="#6e6e6e"/><path d="M1161 115 L1167 121 M1167 115 L1161 121" stroke="#fff" stroke-width="1.6"/>
<circle cx="1182" cy="118" r="6.8" fill="#6e6e6e"/><rect x="1179.7" y="114.5" width="5.3" height="4" fill="none" stroke="#fff" stroke-width="1"/><rect x="1178" y="116.8" width="5.3" height="4" fill="#6e6e6e" stroke="#fff" stroke-width="1"/>
<rect x="1161.5" y="164.5" width="15.5" height="8" fill="#fff" stroke="#111" stroke-width="1"/>
<rect x="1161" y="184" width="16.5" height="9" fill="#384a68"/>
<rect x="1161" y="204" width="16.5" height="9" fill="#000"/>
<use href="#eye" x="1423" y="167.7"/>
<g transform="translate(1423 187.7)"><path d="M-7.5 0 Q0 -8 7.5 0 Q0 7 -7.5 0Z" fill="none" stroke="#2a3656" stroke-width="2.2"/><circle cx="0" cy="0.2" r="3.2" fill="#2a3656"/></g>
<use href="#eye" x="1423" y="207.7"/>
<g fill="#b8b8b8" stroke="#b8b8b8"><use href="#lock" x="1445" y="168.5"/><use href="#lock" x="1445" y="208.5"/></g>
<g fill="#a9b8d8" stroke="#a9b8d8"><use href="#lock" x="1445" y="188.5"/></g>
<g opacity="0.85"><use href="#pen" x="1401" y="188"/></g>
</svg>
<svg class="a" style="left:1455px;top:104px" width="45" height="400" viewBox="1455 104 45 400">
<defs><g id="dwin"><rect x="0.5" y="0.5" width="27" height="27" fill="#fff" stroke="#222" stroke-width="1"/><rect x="0" y="0" width="28" height="4.5" fill="#000"/><rect x="1.5" y="1" width="2.8" height="2.8" fill="#fff"/></g></defs>
<g fill="#8a8a8a"><rect x="1463" y="116.3" width="1.6" height="1.6"/><rect x="1463" y="260.8" width="1.6" height="1.6"/><rect x="1463" y="408.6" width="1.6" height="1.6"/><rect x="1469" y="116.3" width="1.6" height="1.6"/><rect x="1469" y="260.8" width="1.6" height="1.6"/><rect x="1469" y="408.6" width="1.6" height="1.6"/><rect x="1475" y="116.3" width="1.6" height="1.6"/><rect x="1475" y="260.8" width="1.6" height="1.6"/><rect x="1475" y="408.6" width="1.6" height="1.6"/><rect x="1481" y="116.3" width="1.6" height="1.6"/><rect x="1481" y="260.8" width="1.6" height="1.6"/><rect x="1481" y="408.6" width="1.6" height="1.6"/><rect x="1487" y="116.3" width="1.6" height="1.6"/><rect x="1487" y="260.8" width="1.6" height="1.6"/><rect x="1487" y="408.6" width="1.6" height="1.6"/></g><rect x="1456" y="120" width="46" height="42.5" rx="5" fill="#b8b8b8"/><rect x="1456" y="417" width="46" height="42.5" rx="5" fill="#b8b8b8"/><use href="#dwin" x="1463" y="127.2"/><use href="#dwin" x="1463" y="174.3"/><use href="#dwin" x="1463" y="220.2"/><use href="#dwin" x="1463" y="276"/><use href="#dwin" x="1463" y="321.6"/><use href="#dwin" x="1463" y="367.4"/><use href="#dwin" x="1463" y="423.5"/><use href="#dwin" x="1463" y="471"/>
<path d="M1471 140 L1476 137 V150 L1471 152Z" fill="#999" stroke="#555" stroke-width="0.6"/><path d="M1474 139 L1483 134 V147 L1474 151Z" fill="#fff" stroke="#666" stroke-width="0.7"/><path d="M1476 146 L1480 139 L1481 146Z" fill="none" stroke="#ee3333" stroke-width="0.8"/>
<rect x="1470" y="186" width="10" height="8" fill="#f2ecc8" stroke="#666" stroke-width="0.8"/><circle cx="1479" cy="193" r="4.5" fill="#f2ecc8" fill-opacity="0.8" stroke="#666" stroke-width="0.8"/>
<rect x="1468" y="230" width="18" height="12" rx="2.5" fill="#f4f4f4" stroke="#a9bfe0" stroke-width="0.9"/>
<g fill="#111"><rect x="1467" y="284" width="3.5" height="3"/><rect x="1467" y="289.5" width="3.5" height="3"/><rect x="1467" y="295" width="3.5" height="3"/></g>
<g fill="none" stroke="#333" stroke-width="0.8"><rect x="1473" y="284" width="14" height="3"/><rect x="1473" y="289.5" width="14" height="3"/><rect x="1473" y="295" width="14" height="3"/></g>
<path d="M1469 330 H1485 L1479 337 V344 L1475 345 V337Z" fill="#bbb" stroke="#555" stroke-width="0.8"/>
<path d="M1468 376 L1475 379 H1485 V389 H1475 L1468 392Z" fill="#eee" stroke="#444" stroke-width="0.8"/><line x1="1466" y1="384" x2="1488" y2="384" stroke="#f09090" stroke-width="0.8" stroke-dasharray="1.5 1"/>
<g fill="#555" font-family="Liberation Sans" font-size="3"><text x="1466" y="433">Command doc</text><text x="1466" y="437">Command fre</text><text x="1466" y="441">Command foo</text><text x="1466" y="445">Command ffo</text></g>
<line x1="1464" y1="447" x2="1490" y2="447" stroke="#333" stroke-width="0.6"/>
<text x="1466" y="450.5" font-family="Liberation Sans" font-size="3.5" fill="#222">c    command</text>
<rect x="1470" y="480" width="14" height="14" rx="1" fill="#d69030" stroke="#8a5a10" stroke-width="0.7"/><rect x="1472" y="482" width="10" height="11" fill="#fff"/><rect x="1474" y="478.5" width="6" height="3" fill="#999"/>
</svg>
<div id="status" class="a">
<span class="t" style="left:2px;top:10.5px;font-size:10px;letter-spacing:0.1px">177.6,94.8</span>
<span class="t" style="left:2px;top:30.5px;font-size:10px;letter-spacing:0.1px">@177.6,94.8</span>
<div class="a" style="left:253px;top:4px;width:1px;height:39px;background:#8a8a8a"></div>
<div class="a" style="left:254px;top:4px;width:1px;height:39px;background:#fafafa"></div>
<span class="t" style="left:256px;top:10.3px;font-size:10px;letter-spacing:0.05px">201.3177&lt;28°</span>
<span class="t" style="left:256px;top:30.3px;font-size:10px;letter-spacing:0.05px">@201.3177&lt;28°</span>
<div class="a" style="left:506.7px;top:21px;width:6px;height:6px;border-radius:3px;background:#c6c6c6"></div>
<span class="t" style="left:598px;top:20.8px;font-size:10px;letter-spacing:0.16px">Select entity or region</span>
<svg class="a" style="left:716px;top:7px" width="21" height="32" viewBox="0 0 21 32"><path d="M10.5 1 C5 1 1.5 4.5 1.5 10 V22 C1.5 27.5 5.5 30.5 10.5 30.5 C15.5 30.5 19.5 27.5 19.5 22 V10 C19.5 4.5 16 1 10.5 1Z" fill="#fff" stroke="#333" stroke-width="1"/><path d="M1.5 12 C7 10.5 14 10.5 19.5 12 M10.5 1 V5 M10.5 10 V11" stroke="#333" stroke-width="1" fill="none"/><rect x="8.8" y="4" width="3.4" height="6.5" rx="1.5" fill="#fff" stroke="#333" stroke-width="1"/></svg>
<div class="a" style="left:940.4px;top:21px;width:6px;height:6px;border-radius:3px;background:#c6c6c6"></div>
<span class="t" style="left:949.5px;top:20.5px;font-size:10px;letter-spacing:0.13px">No entities selected.</span>
<div class="a" style="left:1269px;top:21px;width:6px;height:6px;border-radius:3px;background:#c6c6c6"></div>
</div>
<div id="dlg" class="a">
<span class="t dl" style="left:20.4px;top:24.5px">Parent layer:</span>
<div class="combo" style="left:104px;top:21px;width:211px;height:20.5px"><div class="step" style="right:2px;top:2.3px"><svg width="16" height="16" viewBox="0 0 16 16" style="position:absolute;left:0;top:0"><path d="M5 6.3 L8 3.5 L11 6.3 M5 9.7 L8 12.5 L11 9.7" fill="none" stroke="#fff" stroke-width="1.5" stroke-linecap="round" stroke-linejoin="round"/></svg></div></div>
<span class="t dl" style="left:20.4px;top:55.8px">Layer name:</span>
<div class="a" style="left:104px;top:53px;width:211px;height:19.5px;background:#fff;border-bottom:1px solid #b4b4b4;box-shadow:0 0 0 0.5px #d8d8d8"></div>
<span class="t dl" style="left:105px;top:55.8px">Center</span>
<span class="t" style="left:27.5px;top:80px;font-size:11.5px;color:#222">Attributes</span>
<div class="a" style="left:20px;top:91px;width:296px;height:162px;background:#e3e3e3;border:1px solid #d9d9d9;border-radius:5px"></div>
<span class="t dl" style="right:223.5px;top:111.8px">Color:</span>
<div class="combo" style="left:121px;top:108px;width:179px;height:20.5px"><div class="step" style="right:2px;top:2.3px"><svg width="16" height="16" viewBox="0 0 16 16" style="position:absolute;left:0;top:0"><path d="M5 6.3 L8 3.5 L11 6.3 M5 9.7 L8 12.5 L11 9.7" fill="none" stroke="#fff" stroke-width="1.5" stroke-linecap="round" stroke-linejoin="round"/></svg></div>
<div class="a" style="left:4px;top:6px;width:16px;height:9.3px;background:#000"></div><span class="t dl" style="left:26px;top:3.3px">Black</span></div>
<span class="t dl" style="right:223.5px;top:143.3px">Lineweight:</span>
<div class="combo" style="left:121px;top:139.5px;width:179px;height:20.7px"><div class="step" style="right:2px;top:2.3px"><svg width="16" height="16" viewBox="0 0 16 16" style="position:absolute;left:0;top:0"><path d="M5 6.3 L8 3.5 L11 6.3 M5 9.7 L8 12.5 L11 9.7" fill="none" stroke="#fff" stroke-width="1.5" stroke-linecap="round" stroke-linejoin="round"/></svg></div>
<div class="a" style="left:4px;top:10px;width:16px;height:1px;background:#111"></div><span class="t dl" style="left:26px;top:3.3px">0.25mm (ISO)</span></div>
<span class="t dl" style="right:223.5px;top:175.5px">Linetype:</span>
<div class="combo" style="left:121px;top:171.4px;width:179px;height:20.9px"><div class="step" style="right:2px;top:2.4px"><svg width="16" height="16" viewBox="0 0 16 16" style="position:absolute;left:0;top:0"><path d="M5 6.3 L8 3.5 L11 6.3 M5 9.7 L8 12.5 L11 9.7" fill="none" stroke="#fff" stroke-width="1.5" stroke-linecap="round" stroke-linejoin="round"/></svg></div>
<span class="t dl" style="left:3.5px;top:2.5px">Continuous</span></div>
<div class="chk" style="left:35px;top:203px"><svg width="14" height="14" viewBox="0 0 14 14" style="position:absolute;left:0;top:0"><path d="M3.3 7.3 L5.9 10 L10.8 3.8" fill="none" stroke="#fff" stroke-width="1.8" stroke-linecap="round" stroke-linejoin="round"/></svg></div>
<span class="t dl" style="left:53.4px;top:203.5px">Plottable</span>
<div class="chk" style="left:35px;top:226px"><svg width="14" height="14" viewBox="0 0 14 14" style="position:absolute;left:0;top:0"><path d="M3.3 7.3 L5.9 10 L10.8 3.8" fill="none" stroke="#fff" stroke-width="1.8" stroke-linecap="round" stroke-linejoin="round"/></svg></div>
<span class="t dl" style="left:53.4px;top:226.8px">Snappable</span>
<div class="a" style="left:164.5px;top:306.7px;width:67.5px;height:20.3px;background:#fff;border-radius:5px;box-shadow:0 0 0 0.5px #cfcfcf,0 0.5px 1.5px rgba(0,0,0,.2)"></div>
<span class="t dl" style="left:178px;top:310.3px">Cancel</span>
<div class="a" style="left:248px;top:306.7px;width:67px;height:20.3px;background:linear-gradient(#2b8cff,#0a6ff0);border-radius:5px;box-shadow:0 0.5px 1px rgba(0,0,0,.2)"></div>
<span class="t dl" style="left:272px;top:310.3px;color:#fff">OK</span>
</div>
<svg class="a" style="left:740px;top:260px" width="102" height="102" viewBox="740 260 102 102">
<defs><filter id="rb" x="-20%" y="-20%" width="140%" height="140%"><feGaussianBlur stdDeviation="0.9"/></filter><filter id="rb2" x="-20%" y="-20%" width="140%" height="140%"><feGaussianBlur stdDeviation="2"/></filter></defs>
<circle cx="791" cy="311" r="31" fill="none" stroke="#fff" stroke-width="5" opacity="0.75" filter="url(#rb2)"/>
<circle cx="791" cy="311" r="35.8" fill="none" stroke="#b0c3d4" stroke-width="7" opacity="0.85" filter="url(#rb)"/>
<circle cx="791" cy="311" r="36.2" fill="none" stroke="#9fb6cb" stroke-width="1.2" opacity="0.5"/>
</svg>
<svg class="a" style="left:785px;top:306px" width="24" height="36" viewBox="0 0 24 36"><path d="M6 5 V26.8 L12.2 21.4 L18.1 32.6 L20.8 30.2 L16.5 20.6 L21.3 20.3Z" fill="#fff" stroke="#000" stroke-width="1.1" stroke-linejoin="round"/></svg>
</body></html>
